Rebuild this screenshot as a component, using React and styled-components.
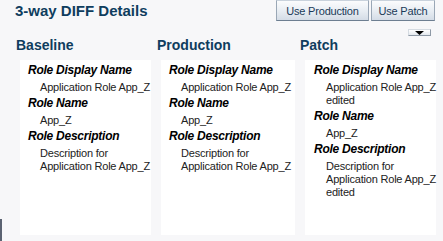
import React from "react";
import styled, { createGlobalStyle } from "styled-components";

const GlobalStyle = createGlobalStyle`
  html, body {
    margin: 0;
    padding: 0;
    background: #f7f7f9;
    font-family: "Liberation Sans", Arial, sans-serif;
  }
`;

const Page = styled.div`
  position: relative;
  width: 443px;
  height: 241px;
  overflow: hidden;
  background: #f7f7f9;
`;

const Header = styled.div`
  display: flex;
  justify-content: space-between;
  align-items: flex-start;
  padding-left: 15px;
  padding-right: 8px;
`;

const Title = styled.h1`
  margin: 0;
  padding-top: 2px;
  font-size: 15px;
  font-weight: bold;
  line-height: 17px;
  color: #0f3d5e;
`;

const Buttons = styled.div`
  display: flex;
  gap: 2px;
`;

const Button = styled.button`
  height: 21px;
  width: ${(p) => p.$w}px;
  padding: 0;
  border: 1px solid #9aa7b6;
  border-bottom-color: #6d7e91;
  border-top-color: #c9d2dc;
  background: linear-gradient(#fbfcfd, #e7ecf2 55%, #d4dce6);
  font-family: "Liberation Sans", Arial, sans-serif;
  font-size: 11px;
  letter-spacing: -0.2px;
  color: #1a3a58;
`;

const ToggleRow = styled.div`
  display: flex;
  justify-content: flex-end;
  padding-right: 12px;
  margin-top: 8px;
`;

const Toggle = styled.div`
  width: 21px;
  height: 5px;
  border: 1px solid #8e99a6;
  border-top-color: #d5dbe2;
  border-left-color: #d5dbe2;
  background: linear-gradient(#ffffff, #e4e8ee);
  display: flex;
  justify-content: center;
  align-items: center;
`;

const Columns = styled.div`
  display: flex;
  padding-left: 16px;
  margin-top: 1px;
`;

const Column = styled.div`
  width: ${(p) => p.$w}px;
  margin-right: ${(p) => p.$gap}px;
  display: flex;
  flex-direction: column;
`;

const ColumnTitle = styled.h2`
  margin: 0;
  font-size: 14px;
  font-weight: bold;
  line-height: 16px;
  color: #0f3d5e;
`;

const Panel = styled.div`
  margin-top: 7px;
  margin-left: ${(p) => p.$inset}px;
  height: 175px;
  background: #ffffff;
  padding: 3px 0 0 ${(p) => p.$pad}px;
  box-sizing: border-box;
`;

const Label = styled.div`
  font-size: 12px;
  font-weight: bold;
  font-style: italic;
  letter-spacing: -0.25px;
  line-height: 15px;
  color: #000;
`;

const Value = styled.div`
  margin: 3px 0 2px 12px;
  font-size: 11px;
  letter-spacing: -0.2px;
  line-height: 13px;
  color: #222;
`;

const Edge = styled.div`
  position: absolute;
  left: 0;
  bottom: 0;
  width: 2px;
  height: 22px;
  background: #5b6272;
`;

const columns = [
  {
    title: "Baseline",
    w: 135,
    gap: 6,
    inset: 4,
    pad: 8,
    values: [
      ["Application Role App_Z"],
      ["App_Z"],
      ["Description for", "Application Role App_Z"],
    ],
  },
  {
    title: "Production",
    w: 138,
    gap: 5,
    inset: 4,
    pad: 8,
    values: [
      ["Application Role App_Z"],
      ["App_Z"],
      ["Description for", "Application Role App_Z"],
    ],
  },
  {
    title: "Patch",
    w: 136,
    gap: 0,
    inset: 5,
    pad: 9,
    values: [
      ["Application Role App_Z", "edited"],
      ["App_Z"],
      ["Description for", "Application Role App_Z", "edited"],
    ],
  },
];

const labels = ["Role Display Name", "Role Name", "Role Description"];

const App = () => {
  return (
    <>
      <GlobalStyle />
      <Page>
        <Header>
          <Title>3-way DIFF Details</Title>
          <Buttons>
            <Button $w={93}>Use Production</Button>
            <Button $w={64}>Use Patch</Button>
          </Buttons>
        </Header>
        <ToggleRow>
          <Toggle>
            <svg width="9" height="4" viewBox="0 0 9 4">
              <path d="M0 0 H9 L4.5 4 Z" fill="#000" />
            </svg>
          </Toggle>
        </ToggleRow>
        <Columns>
          {columns.map((col) => (
            <Column key={col.title} $w={col.w} $gap={col.gap}>
              <ColumnTitle>{col.title}</ColumnTitle>
              <Panel $inset={col.inset} $pad={col.pad}>
                {labels.map((label, i) => (
                  <div key={label}>
                    <Label>{label}</Label>
                    <Value>
                      {col.values[i].map((line) => (
                        <div key={line}>{line}</div>
                      ))}
                    </Value>
                  </div>
                ))}
              </Panel>
            </Column>
          ))}
        </Columns>
        <Edge />
      </Page>
    </>
  );
};

export default App;
